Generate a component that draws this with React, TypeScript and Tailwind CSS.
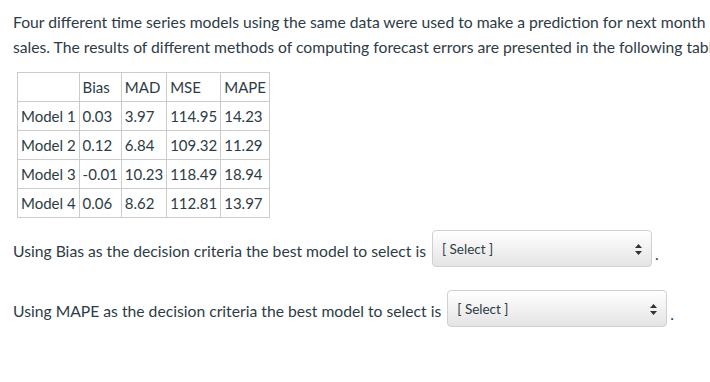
import React from 'react';

const rows = [
  ['Model 1', '0.03', '3.97', '114.95', '14.23'],
  ['Model 2', '0.12', '6.84', '109.32', '11.29'],
  ['Model 3', '-0.01', '10.23', '118.49', '18.94'],
  ['Model 4', '0.06', '8.62', '112.81', '13.97'],
];

const headers = ['', 'Bias', 'MAD', 'MSE', 'MAPE'];

const SelectBox = () => (
  <span className="relative inline-flex h-[37px] w-[220px] items-start rounded-[4px] border border-[#d0d0d0] bg-gradient-to-b from-white to-[#e4e4e4] px-[9px] pt-[10px] text-[13.5px] leading-[16px] text-[#2d3b45]">
    [ Select ]
    <svg
      className="absolute right-[9px] top-[13px]"
      width="7"
      height="11"
      viewBox="0 0 7 11"
    >
      <path d="M3.5 0 L7 4 L0 4 Z" fill="#333" />
      <path d="M3.5 11 L7 7 L0 7 Z" fill="#333" />
    </svg>
  </span>
);

export default function App() {
  return (
    <div className="min-h-screen overflow-hidden bg-white px-[13px] pt-[10px] font-['Lato',sans-serif] text-[15.7px] leading-[25px] text-[#2d3b45]">
      <p className="whitespace-nowrap">
        Four different time series models using the same data were used to make a prediction for next month
      </p>
      <p className="whitespace-nowrap">
        sales. The results of different methods of computing forecast errors are presented in the following table.
      </p>

      <table className="ml-[4px] mt-[12px] border-collapse border border-[#333] text-[15px] leading-[18px]">
        <thead>
          <tr>
            {headers.map((h, i) => (
              <th key={i} className="h-[29px] border border-[#ccc] px-[3px] text-left font-normal">
                {h}
              </th>
            ))}
          </tr>
        </thead>
        <tbody>
          {rows.map((r) => (
            <tr key={r[0]}>
              {r.map((c, i) => (
                <td key={i} className="h-[29px] border border-[#ccc] px-[3px]">
                  {c}
                </td>
              ))}
            </tr>
          ))}
        </tbody>
      </table>

      <div className="mt-[12px] flex items-center">
        <span className="mr-[6px] pt-[6px]">Using Bias as the decision criteria the best model to select is</span>
        <SelectBox />
        <span className="ml-[3px] self-end">.</span>
      </div>

      <div className="mt-[23px] flex items-center">
        <span className="mr-[6px] pt-[6px]">Using MAPE as the decision criteria the best model to select is</span>
        <SelectBox />
        <span className="ml-[3px] self-end">.</span>
      </div>
    </div>
  );
}
